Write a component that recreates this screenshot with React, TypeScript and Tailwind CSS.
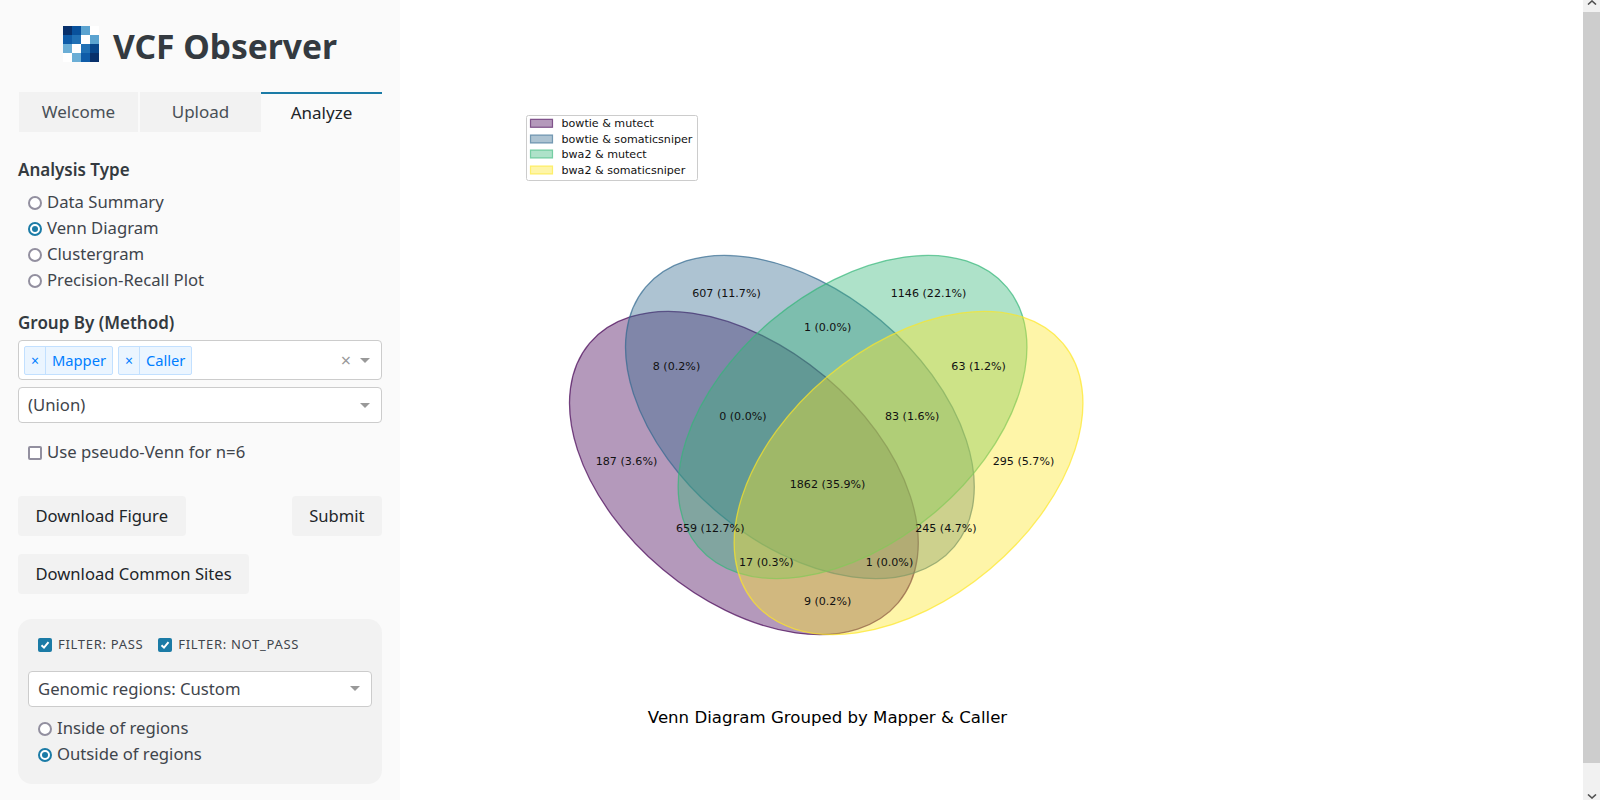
import React from 'react';

const SANS = 'font-["Noto_Sans",sans-serif]';

// Logo cells, row by row
const logoCells = [
  '#08306b', '#08519c', '#5ba3d0', '#ffffff',
  '#0f5ca8', '#2171b5', '#ffffff', '#5ba3d0',
  '#6baed6', '#ffffff', '#2171b5', '#08468b',
  '#ffffff', '#6baed6', '#0f5ca8', '#08306b',
];

const Logo = () => (
  <svg width="36" height="36" viewBox="0 0 4 4" shapeRendering="crispEdges" className="shrink-0">
    {logoCells.map((fill, i) => (
      <rect key={i} x={i % 4} y={Math.floor(i / 4)} width="1" height="1" fill={fill} />
    ))}
  </svg>
);

const Radio = ({ label, checked }: { label: string; checked?: boolean }) => (
  <label className="flex h-[26px] items-center text-[16.7px] text-[#3f454c]">
    {checked ? (
      <span className="flex h-[14px] w-[14px] items-center justify-center rounded-full border-2 border-[#1b7ba6] bg-white">
        <span className="h-[6px] w-[6px] rounded-full bg-[#1b7ba6]" />
      </span>
    ) : (
      <span className="h-[14px] w-[14px] rounded-full border-2 border-[#928f9f] bg-white" />
    )}
    <span className="ml-[5px] -translate-y-px">{label}</span>
  </label>
);

const Checked = ({ label }: { label: string }) => (
  <label className="flex items-center text-[13px] tracking-[0.7px] text-[#3f454c]">
    <span className="flex h-[14px] w-[14px] items-center justify-center rounded-[2px] bg-[#1b7ba6]">
      <svg width="10" height="10" viewBox="0 0 10 10" fill="none" stroke="white" strokeWidth="2">
        <path d="M1.5 5.2 L4 7.6 L8.5 2.2" />
      </svg>
    </span>
    <span className="ml-[6px]">{label}</span>
  </label>
);

const Arrow = () => (
  <svg width="10" height="5" viewBox="0 0 10 5" className="shrink-0">
    <path d="M0 0 H10 L5 5 Z" fill="#999999" />
  </svg>
);

const Tag = ({ label }: { label: string }) => (
  <div className="flex h-[29px] items-center rounded-[2px] border border-[#c2e0ff] bg-[#ebf5ff] text-[14.7px] text-[#007eff]">
    <span className="flex h-full w-[21px] items-center justify-center border-r border-[#c2e0ff] text-[14px]">×</span>
    <span className="px-[6px]">{label}</span>
  </div>
);

const GrayButton = ({ label }: { label: string }) => (
  <button className="flex h-[40px] items-center justify-center rounded-[4px] bg-[#f2f2f2] px-[17.5px] text-[16.6px] text-[#212529]">
    {label}
  </button>
);

const Select = ({ value, className }: { value: string; className: string }) => (
  <div className={`flex h-[36px] items-center justify-between rounded-[4px] border border-[#cccccc] bg-white pl-[9px] pr-[11px] text-[16.7px] text-[#3f454c] ${className}`}>
    <span>{value}</span>
    <Arrow />
  </div>
);

const Sidebar = () => (
  <aside className={`h-[800px] w-[400px] shrink-0 overflow-hidden bg-[#fafafa] px-[18px] ${SANS}`}>
    <div className="flex h-[92px] items-start justify-center pt-[26px]">
      <Logo />
      <h1 className="ml-[14px] -translate-y-px text-[33.6px] leading-[42px] font-bold text-[#343a40]">VCF Observer</h1>
    </div>

    <div className="flex h-[40px] text-[17px]">
      <div className="ml-[1px] flex w-[121px] items-center justify-center border-r-[2px] border-[#fafafa] bg-[#f2f2f2] text-[#495057]">Welcome</div>
      <div className="flex w-[121px] items-center justify-center bg-[#f2f2f2] text-[#495057]">Upload</div>
      <div className="flex w-[121px] items-center justify-center border-t-2 border-[#1b7ba6] text-[#212529]">Analyze</div>
    </div>

    <h2 className="mt-[24px] text-[17px] leading-[28px] font-semibold text-[#343a40]">Analysis Type</h2>
    <div className="mt-[6px] pl-[10px]">
      <Radio label="Data Summary" />
      <Radio label="Venn Diagram" checked />
      <Radio label="Clustergram" />
      <Radio label="Precision-Recall Plot" />
    </div>

    <h2 className="mt-[15px] text-[17px] leading-[28px] font-semibold text-[#343a40]">Group By (Method)</h2>
    <div className="mt-[3px] flex h-[40px] items-center rounded-[4px] border border-[#cccccc] bg-white pl-[5px] pr-[11px]">
      <div className="flex flex-1 gap-[5px]">
        <Tag label="Mapper" />
        <Tag label="Caller" />
      </div>
      <span className="mr-[9px] text-[18px] leading-none text-[#999999]">×</span>
      <Arrow />
    </div>
    <Select value="(Union)" className="mt-[7px]" />

    <label className="mt-[17px] flex h-[26px] items-center pl-[10px] text-[16.7px] text-[#3f454c]">
      <span className="h-[14px] w-[14px] rounded-[2px] border-2 border-[#928f9f] bg-white" />
      <span className="ml-[5px] -translate-y-px">Use pseudo-Venn for n=6</span>
    </label>

    <div className="mt-[30px] flex justify-between">
      <GrayButton label="Download Figure" />
      <GrayButton label="Submit" />
    </div>
    <div className="mt-[18px] flex">
      <GrayButton label="Download Common Sites" />
    </div>

    <div className="mt-[25px] h-[165px] rounded-[14px] bg-[#f2f2f2] px-[10px] pt-[16px]">
      <div className="flex gap-[15px] pl-[10px]">
        <Checked label="FILTER: PASS" />
        <Checked label="FILTER: NOT_PASS" />
      </div>
      <Select value="Genomic regions: Custom" className="mt-[16px]" />
      <div className="mt-[9px] pl-[10px]">
        <Radio label="Inside of regions" />
        <Radio label="Outside of regions" checked />
      </div>
    </div>
  </aside>
);

// Venn sets: ellipse params in axes units, 560px per unit
const vennSets = [
  { cx: 0.35, cy: 0.4, angle: 140, color: '#440154' },
  { cx: 0.45, cy: 0.5, angle: 140, color: '#31688e' },
  { cx: 0.544, cy: 0.5, angle: 40, color: '#35b779' },
  { cx: 0.644, cy: 0.4, angle: 40, color: '#fde725' },
];

const vennLabels: [string, number, number][] = [
  ['607 (11.7%)', 726.5, 293],
  ['1146 (22.1%)', 928.6, 293],
  ['1 (0.0%)', 827.6, 326.5],
  ['8 (0.2%)', 676.5, 365.5],
  ['63 (1.2%)', 978.6, 365.5],
  ['0 (0.0%)', 742.9, 416.3],
  ['83 (1.6%)', 912.2, 416.3],
  ['187 (3.6%)', 626.5, 461.2],
  ['295 (5.7%)', 1023.5, 461.2],
  ['1862 (35.9%)', 827.6, 483.7],
  ['659 (12.7%)', 710.2, 528.3],
  ['245 (4.7%)', 945.9, 528.3],
  ['17 (0.3%)', 766.3, 562.2],
  ['1 (0.0%)', 889.5, 562.2],
  ['9 (0.2%)', 827.6, 601],
];

const legend = [
  { label: 'bowtie & mutect', color: '#440154', y: 123.3 },
  { label: 'bowtie & somaticsniper', color: '#31688e', y: 139 },
  { label: 'bwa2 & mutect', color: '#35b779', y: 154 },
  { label: 'bwa2 & somaticsniper', color: '#fde725', y: 170 },
];

const VennFigure = () => (
  <svg width="1183" height="800" viewBox="400 0 1183 800" className="block" fontFamily="'DejaVu Sans', sans-serif">
    <rect x="526.5" y="115.5" width="171" height="65" rx="2" fill="white" stroke="#cccccc" />
    {legend.map((l) => (
      <g key={l.label}>
        <rect x="530.5" y={l.y - 4} width="22" height="8" fill={l.color} fillOpacity="0.4" stroke={l.color} strokeOpacity="0.6" strokeWidth="1.2" />
        <text x="561.5" y={l.y + 4} fontSize="11.1" fill="#111111">{l.label}</text>
      </g>
    ))}

    {vennSets.map((s) => (
      <ellipse
        key={s.color}
        rx="201.6"
        ry="126"
        transform={`translate(${547.9 + s.cx * 560} ${697 - s.cy * 560}) rotate(${-s.angle})`}
        fill={s.color}
        fillOpacity="0.4"
        stroke={s.color}
        strokeOpacity="0.7"
        strokeWidth="1.3"
      />
    ))}

    {vennLabels.map(([text, x, y]) => (
      <text key={text + x} x={x} y={y + 4} textAnchor="middle" fontSize="11.1" fill="#111111">{text}</text>
    ))}

    <text x="827.5" y="723" textAnchor="middle" fontSize="16.6" fill="#000000">Venn Diagram Grouped by Mapper &amp; Caller</text>
  </svg>
);

const Scrollbar = () => (
  <div className="flex h-[800px] w-[17px] shrink-0 flex-col bg-[#f1f1f1]">
    <div className="flex h-[12px] items-start justify-center">
      <svg width="10" height="5" viewBox="0 0 10 5" fill="none" stroke="#505050" strokeWidth="1.6">
        <path d="M1 4.5 L5 1 L9 4.5" />
      </svg>
    </div>
    <div className="h-[751px] bg-[#cdcdcd]" />
    <div className="flex flex-1 items-end justify-center pb-[1px]">
      <svg width="10" height="5" viewBox="0 0 10 5" fill="none" stroke="#505050" strokeWidth="1.6">
        <path d="M1 0.5 L5 4 L9 0.5" />
      </svg>
    </div>
  </div>
);

export default function App() {
  return (
    <div className="flex h-[800px] w-[1600px] overflow-hidden bg-white">
      <Sidebar />
      <main className="flex-1">
        <VennFigure />
      </main>
      <Scrollbar />
    </div>
  );
}
